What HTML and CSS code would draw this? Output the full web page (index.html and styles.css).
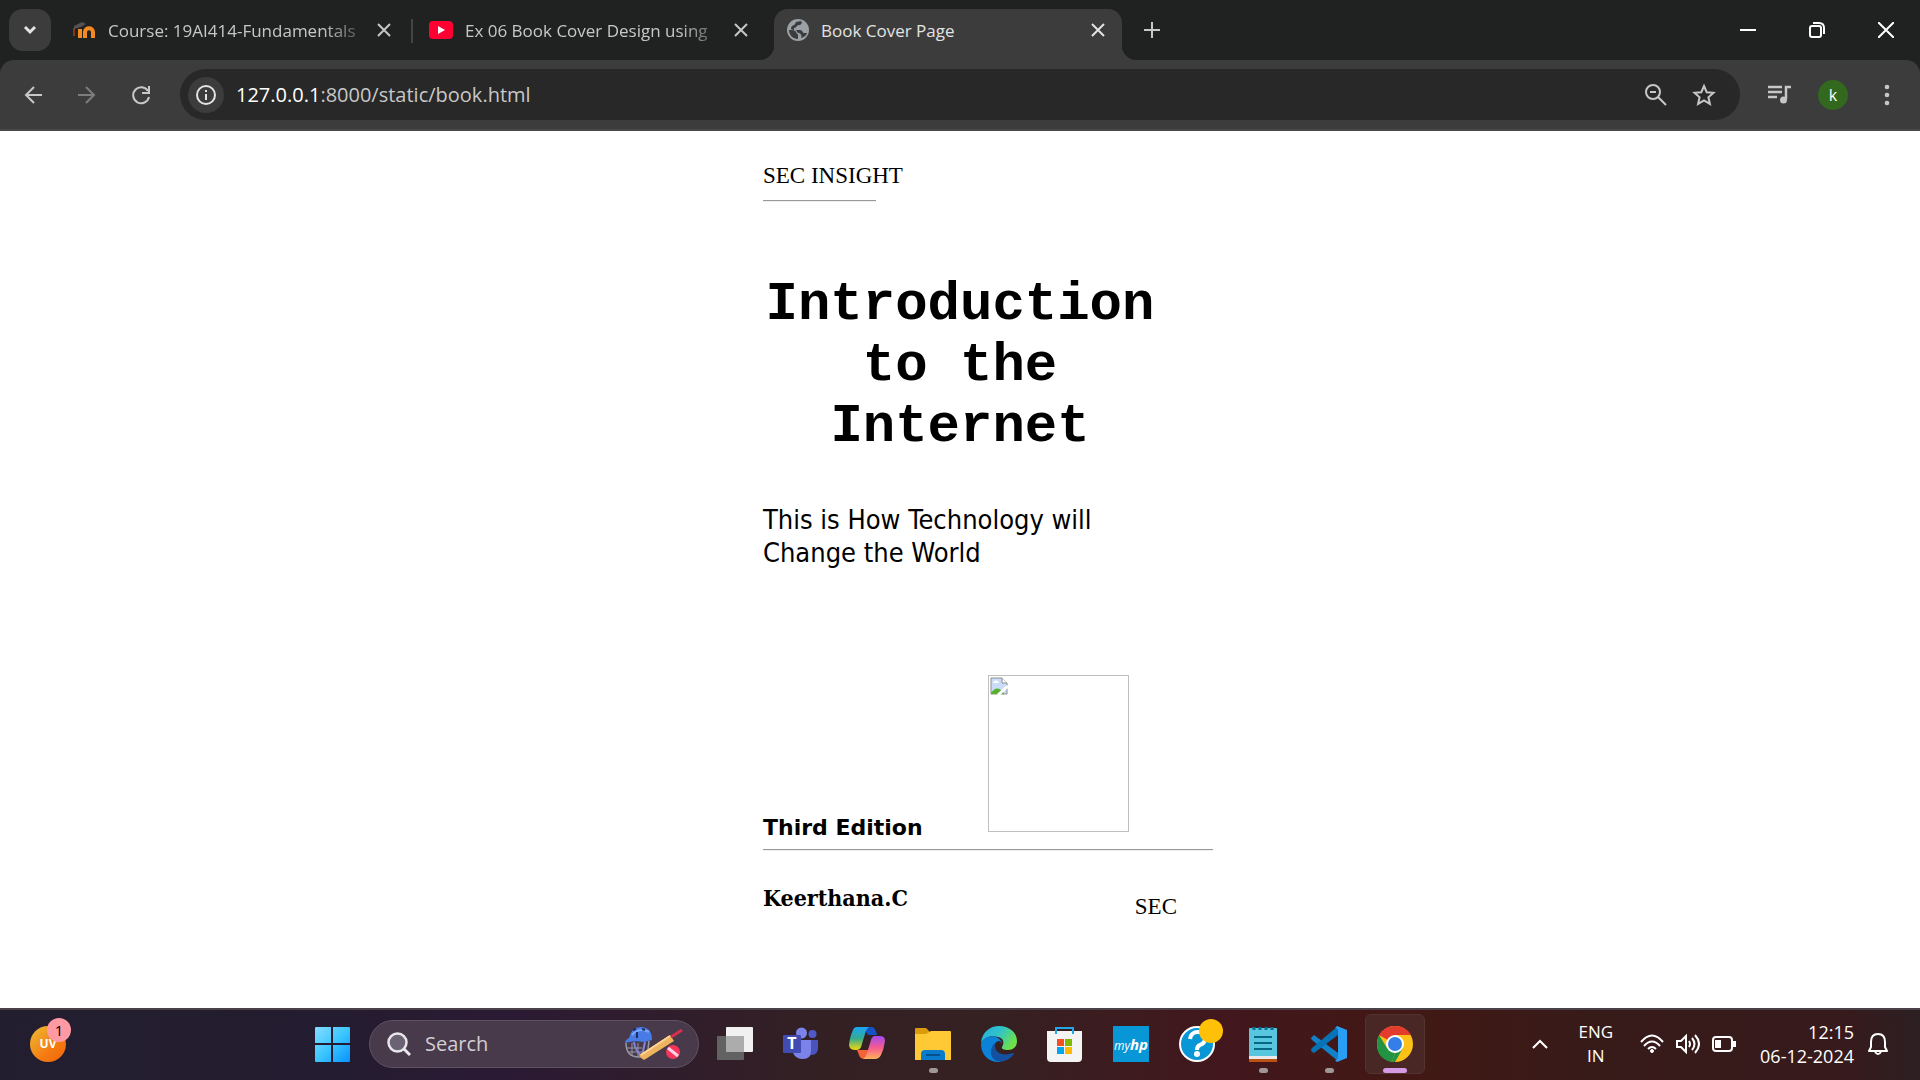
FILE: index.html
```html
<!DOCTYPE html>
<html lang="en">
<head>
<meta charset="utf-8">
<meta name="viewport" content="width=device-width, initial-scale=1">
<title>Book Cover Page</title>
<link rel="stylesheet" href="styles.css">
</head>
<body>
<header class="browser">
  <div class="tabstrip">
    <button class="tab-search" aria-label="Search tabs"><svg width="14" height="10" viewBox="0 0 14 10"><path d="M2 2l5 5 5-5" fill="none" stroke="currentColor" stroke-width="3"/></svg></button>
    <div class="tab tab-first">
      <svg class="favicon" width="24" height="24" viewBox="0 0 24 24"><path d="M8 20v-9M13 20v-6c0-5 8-5 8 0v6" fill="none" stroke="#f58a20" stroke-width="4"/><path d="M2 10v8" fill="none" stroke="#7a3c1a" stroke-width="2"/><path d="M2 8l8-4 4 2-5 3-7 2z" fill="#565052"/></svg>
      <button class="tab-title fade">Course: 19AI414-Fundamentals</button>
      <button class="tab-close" aria-label="Close tab"><svg width="14" height="14" viewBox="0 0 14 14"><path d="M1 1l12 12M13 1L1 13"/></svg></button>
    </div>
    <span class="tab-divider"></span>
    <div class="tab tab-second">
      <svg class="favicon" width="24" height="24" viewBox="0 0 24 24"><rect y="3" width="24" height="18" rx="4" fill="#ff0033"/><path d="M9 8l7 4-7 4z" fill="#fff"/></svg>
      <button class="tab-title fade">Ex 06 Book Cover Design using</button>
      <button class="tab-close" aria-label="Close tab"><svg width="14" height="14" viewBox="0 0 14 14"><path d="M1 1l12 12M13 1L1 13"/></svg></button>
    </div>
    <div class="tab tab-active">
      <svg class="favicon" width="22" height="22" viewBox="0 0 22 22"><circle cx="11" cy="11" r="11" fill="#9aa0a6"/><path d="M2 11c3 0 6 0 7 2s2 2 2 3v4c-5 0-9-4-9-9zM9 3l5-1c2 2 0 4-2 4-3 0-2 3-5 3v2h6c3 0 2 3 4 3h3c-1 3-3 4-6 5 1-3 0-4-2-5-3 0-1-3-4-3-4 0-5-1-3-4 3-1 3-2 4-4z" fill="#3c3c3c"/></svg>
      <button class="tab-title">Book Cover Page</button>
      <button class="tab-close" aria-label="Close tab"><svg width="14" height="14" viewBox="0 0 14 14"><path d="M1 1l12 12M13 1L1 13"/></svg></button>
    </div>
    <button class="new-tab" aria-label="New tab"><svg width="16" height="16" viewBox="0 0 16 16"><path d="M8 0v16M0 8h16" stroke="currentColor" stroke-width="2"/></svg></button>
    <div class="window-controls">
      <button aria-label="Minimize"><svg width="16" height="16" viewBox="0 0 16 16"><path d="M0 8h16" stroke="#fff" stroke-width="2"/></svg></button>
      <button aria-label="Restore"><svg width="16" height="16" viewBox="0 0 16 16" fill="none" stroke="#fff" stroke-width="2"><rect x="1" y="4" width="11" height="11" rx="2"/><path d="M4 1h6q5 0 5 5v6"/></svg></button>
      <button aria-label="Close"><svg width="16" height="16" viewBox="0 0 16 16"><path d="M0 0l16 16M16 0L0 16" stroke="#fff" stroke-width="2"/></svg></button>
    </div>
  </div>
  <div class="toolbar">
    <button class="nav" aria-label="Back"><svg width="18" height="18" viewBox="0 0 18 18"><path d="M18 9H2M10 1L2 9l8 8"/></svg></button>
    <button class="nav nav-off" aria-label="Forward"><svg width="18" height="18" viewBox="0 0 18 18"><path d="M0 9h16M8 1l8 8-8 8"/></svg></button>
    <button class="nav" aria-label="Reload"><svg width="20" height="20" viewBox="0 0 20 20"><path d="M17 6a8 8 0 1 0 1 6M18 1v7h-7"/></svg></button>
    <div class="omnibox">
      <button class="site-info" aria-label="Site information"><svg width="20" height="20" viewBox="0 0 20 20"><circle cx="10" cy="10" r="9" fill="none" stroke="currentColor" stroke-width="2"/><path d="M10 9v6M10 5v2" stroke="currentColor" stroke-width="2"/></svg></button>
      <a class="url" href="#cover"><span class="host">127.0.0.1</span>:8000/static/book.html</a>
      <button class="box-icon" aria-label="Zoom"><svg width="22" height="22" viewBox="0 0 22 22" fill="none" stroke="currentColor" stroke-width="2"><circle cx="8" cy="8" r="7"/><path d="M13 13l8 8M5 8h6"/></svg></button>
      <button class="box-icon" aria-label="Bookmark"><svg width="24" height="24" viewBox="0 0 24 24"><path d="M12 3l2.700 6.200 6.800.6-5.100 4.500 1.500 6.600-5.900-3.500-5.900 3.500 1.500-6.600-5.100-4.500 6.800-.6z" fill="none" stroke="currentColor" stroke-width="2"/></svg></button>
    </div>
    <button class="nav media" aria-label="Media"><svg width="24" height="24" viewBox="0 0 24 24"><path d="M1 4h14M1 9h14M1 14h9M24 4h-5v12" stroke-width="2.500"/><circle cx="16.500" cy="17" r="3.500" fill="currentColor" stroke="none"/></svg></button>
    <button class="profile" aria-label="Profile k">k</button>
    <button class="nav" aria-label="Menu"><svg width="6" height="26" viewBox="0 0 6 26"><g fill="currentColor" stroke="none"><circle cx="3" cy="5" r="2.300"/><circle cx="3" cy="13" r="2.300"/><circle cx="3" cy="21" r="2.300"/></g></svg></button>
  </div>
</header>

<main class="page" id="cover">
  <article class="cover">
    <p class="brand">SEC INSIGHT</p>
    <hr class="rule rule-short">
    <h1 class="title">Introduction to the Internet</h1>
    <p class="subtitle">This is How Technology will Change the World</p>
    <div class="edition-row">
      <strong class="edition">Third Edition</strong>
      <div class="picture" role="img" aria-label="Cover picture"><svg width="18" height="18" viewBox="0 0 18 18"><path d="M1 1h11l5 5v11H1z" fill="#c9dcf8" stroke="#8e8e8e"/><path d="M3 6q0-2 2-2 2-2 4 2z" fill="#fff"/><path d="M1 16q6-9 13 0v1H1z" fill="#58b02e"/><path d="M12 1v5h5" fill="#fff" stroke="#8e8e8e"/><path d="M8 18L18 9" stroke="#fff" stroke-width="3"/></svg></div>
    </div>
    <hr class="rule rule-long">
    <div class="author-row">
      <strong class="author">Keerthana.C</strong>
      <p class="publisher">SEC</p>
    </div>
  </article>
</main>

<footer class="taskbar">
  <button class="widget" aria-label="Widgets"><span class="uv">UV</span><span class="count">1</span></button>
  <div class="apps">
    <button class="app" aria-label="Start"><svg width="36" height="36" viewBox="0 0 36 36"><defs><linearGradient id="win" x1="0" y1="0" x2="1" y2="1"><stop offset="0" stop-color="#86dcff"/><stop offset=".5" stop-color="#3cc6ff"/><stop offset="1" stop-color="#0793ff"/></linearGradient></defs><path d="M0 2q0-1 1-1h15v16H0zM18 1h16q1 0 1 1v15H18zM0 19h16v17H1q-1 0-1-1zM18 19h17v16q0 1-1 1H18z" fill="url(#win)"/></svg></button>
    <label class="search">
      <svg width="24" height="24" viewBox="0 0 24 24" fill="none" stroke="#e8e6ea" stroke-width="2.500"><circle cx="10.500" cy="10.500" r="9" fill="#6b6273"/><path d="M17 17l6 6" stroke-width="3"/></svg>
      <input class="search-input" type="text" placeholder="Search" aria-label="Search">
      <svg width="60" height="36" viewBox="0 0 60 36"><path d="M2 17q0 14 13 14h8l2-16" fill="none" stroke="#9a98a5" stroke-width="1.500"/><path d="M3 22h15M5 26h14M8 17v12M14 17v14" stroke="#9a98a5"/><path d="M10 16q1 9 8 14l3-14" fill="none" stroke="#8584dc" stroke-width="2"/><path d="M5 12Q8 0 18 1q10 1 10 13l-8 2Q10 14 1 17q0-3 4-5z" fill="#487be5"/><path d="M8 9q7-8 17-3" fill="none" stroke="#78a8ff" stroke-width="2"/><path d="M13 6v6M18 3l3 1M9 4l3-1" stroke="#1d2d62" stroke-width="2"/><path d="M15 29L46 9l4 6-30 19q-3-1-5-5z" fill="#edb35f"/><path d="M17 29L46 10" stroke="#ffd695" stroke-width="2"/><path d="M47 11L58 4" stroke="#d92f4b" stroke-width="3"/><circle cx="49" cy="26" r="7" fill="#f6345c"/><path d="M44 22l10 8" stroke="#ffd3e5" stroke-width="3"/></svg>
    </label>
    <button class="app" aria-label="Task view"><svg width="36" height="36" viewBox="0 0 36 36"><rect x="9" y="1" width="27" height="25" rx="1" fill="#f1f1f1"/><rect y="10" width="27" height="24" rx="1" fill="#626262"/><path d="M9 10h18v16H9z" fill="#acacac"/></svg></button>
    <button class="app" aria-label="Teams"><svg width="36" height="36" viewBox="0 0 36 36"><circle cx="29.500" cy="8" r="4" fill="#5059c9"/><path d="M25 14h10v8q0 8-9 7z" fill="#4b53bc"/><circle cx="18.500" cy="7" r="5.500" fill="#7b83eb"/><path d="M12 14h16v11q0 8-8 8-7 0-10-6z" fill="#7b83eb"/><rect y="9" width="18" height="18" rx="1" fill="#424bb2"/><text x="9" y="23" fill="#fff" text-anchor="middle" class="teams-letter">T</text></svg></button>
    <button class="app" aria-label="Copilot"><svg width="36" height="36" viewBox="0 0 36 36"><defs><linearGradient id="cp1" x1="0" y1="0" x2="0" y2="1"><stop offset="0" stop-color="#1aa6f4"/><stop offset=".5" stop-color="#35ac8f"/><stop offset="1" stop-color="#f3da09"/></linearGradient><linearGradient id="cp2" x1="0" y1="0" x2="0" y2="1"><stop offset="0" stop-color="#a34af1"/><stop offset=".5" stop-color="#f55a90"/><stop offset="1" stop-color="#ffb15a"/></linearGradient></defs><path d="M14 1h9q3 0 5 8h-9z" fill="#1552c5"/><path d="M8 24h12l-4 9q-5 0-6-4z" fill="#f66238"/><path d="M8 1h12q-3 2-4 7l-4 13q-1 3-5 3-7 0-7-5 1-9 4-15 1-3 4-3z" fill="url(#cp1)"/><path d="M26 10h5q5 0 5 5-1 8-4 14-2 4-6 4H14q3-2 4-6l4-13q1-4 4-4z" fill="url(#cp2)"/></svg></button>
    <button class="app open" aria-label="File Explorer"><svg width="36" height="36" viewBox="0 0 36 36"><path d="M0 3q0-1 1-1h10l4 4-3 5H0z" fill="#dc9b0a"/><path d="M0 8h11l5-3h19q1 0 1 1v28H0z" fill="#fec934"/><path d="M6 34V28q0-4 4-4h16q4 0 4 4v6z" fill="#087bcd"/><path d="M11 29h14" stroke="#07508c" stroke-width="2"/></svg></button>
    <button class="app" aria-label="Edge"><svg width="36" height="36" viewBox="0 0 36 36"><defs><linearGradient id="edge" x1="0" y1="0" x2="1" y2=".5"><stop offset="0" stop-color="#27abdc"/><stop offset=".5" stop-color="#2fc3cb"/><stop offset="1" stop-color="#6de04b"/></linearGradient></defs><path d="M0 17C1 6 9 0 18 0c11 0 18 7 18 15 0 6-4 9-9 9-4 0-7-1-6-3 3-5 1-9-4-10C9 9 3 12 0 17z" fill="url(#edge)"/><path d="M0 18c2-7 11-10 17-6 3 2 4 4 4 6-1-5-7-4-8 3-1 6 2 12 7 15C9 37 0 30 0 18z" fill="#0b82d8"/><path d="M14 17c-1 9 6 14 18 10l1 1c-6 8-14 9-19 6-6-4-5-13 0-17z" fill="#1451a0"/></svg></button>
    <button class="app" aria-label="Microsoft Store"><svg width="36" height="36" viewBox="0 0 36 36"><path d="M9 8V2h17v6" fill="none" stroke="#20a8e8" stroke-width="2"/><path d="M0 5h35v27q0 4-4 4H4q-4 0-4-4z" fill="#f4f4f4"/><path d="M9 8V5M26 8V5" stroke="#20a8e8" stroke-width="2"/><path d="M10 13h7v7h-7z" fill="#f25022"/><path d="M18 13h7v7h-7z" fill="#7fba00"/><path d="M10 21h7v7h-7z" fill="#00a4ef"/><path d="M18 21h7v7h-7z" fill="#ffb900"/></svg></button>
    <button class="app" aria-label="myHP"><span class="myhp">my<b>hp</b></span></button>
    <button class="app" aria-label="HP Support"><svg width="52" height="52" viewBox="0 0 52 52"><circle cx="26" cy="26" r="17" fill="#0796d6" stroke="#fff" stroke-width="2"/><path d="M19 21q1-7 8-7t7 7q0 4-5 6-3 1-3 5" fill="none" stroke="#fff" stroke-width="4"/><circle cx="26" cy="36" r="3" fill="#fff"/><circle cx="40" cy="13" r="12" fill="#ffc107"/></svg></button>
    <button class="app open" aria-label="Notepad"><svg width="36" height="36" viewBox="0 0 36 36"><path d="M4 33h28v3H4z" fill="#b95212"/><path d="M4 29h28v4H4z" fill="#e9e9ed"/><path d="M4 3q0-1 1-1h26q1 0 1 1v27H4z" fill="#58c6de"/><path d="M9 11h18M9 17h18M9 23h18" stroke="#076785" stroke-width="2"/><path d="M9 1v3M15 1v3M21 1v3M27 1v3" stroke="#067090" stroke-width="3"/></svg></button>
    <button class="app open" aria-label="Visual Studio Code"><svg width="36" height="36" viewBox="0 0 36 36"><path d="M0 12l3-3 24 18v8L1 14q-1-1-1-2z" fill="#1182c9"/><path d="M0 24q0 2 3 3L27 9V0L1 22q-1 1-1 2z" fill="#0872b6"/><path d="M26 0l10 4v28l-10 4-2-2q3 0 3-3V5q0-3-3-3z" fill="#2a9df4"/></svg></button>
    <button class="app open current" aria-label="Chrome"><svg width="36" height="36" viewBox="0 0 36 36"><circle cx="18" cy="18" r="18" fill="#fbc116"/><path d="M18 18L2 9Q7 0 18 0t16 9H18z" fill="#e33b2e"/><path d="M2 9l8 13 8 5-3 9Q0 33 0 18q0-5 2-9z" fill="#229342"/><path d="M15 36h3l8-14-8 5z" fill="#229342"/><circle cx="18" cy="18" r="9" fill="#fff"/><circle cx="18" cy="18" r="7" fill="#347ee8"/></svg></button>
  </div>
  <div class="tray">
    <button class="chevron" aria-label="Hidden icons"><svg width="16" height="10" viewBox="0 0 16 10"><path d="M1 9l7-7 7 7" fill="none" stroke="#fff" stroke-width="2"/></svg></button>
    <button class="lang">ENG<br>IN</button>
    <button class="status" aria-label="Network, volume and battery">
      <svg width="24" height="20" viewBox="0 0 24 20" fill="none" stroke="#fff" stroke-width="2"><path d="M1 8q11-13 22 0M4 12q8-9 16 0M8 15q4-4 8 0"/><circle cx="12" cy="17" r="1.500" fill="#fff" stroke-width="1"/></svg>
      <svg width="24" height="20" viewBox="0 0 24 20" fill="none" stroke="#fff" stroke-width="2"><path d="M1 7h4l5-5v16l-5-5H1zM13 7q2 3 0 6M16 4q5 6 0 12M19 1q8 9 0 18"/></svg>
      <svg width="24" height="16" viewBox="0 0 24 16"><rect x="1" y="1" width="19" height="14" rx="3" fill="none" stroke="#fff" stroke-width="2"/><path d="M3 4h6v8H3zM21 5h3v6h-3z" fill="#fff"/></svg>
    </button>
    <button class="clock">12:15<br>06-12-2024</button>
    <button class="bell" aria-label="Notifications"><svg width="20" height="22" viewBox="0 0 20 22"><path d="M1 18l2-4V9q0-8 7-8t7 8v5l2 4zM7 19q3 4 6 0" fill="none" stroke="#fff" stroke-width="2" stroke-linejoin="round"/></svg></button>
  </div>
</footer>
</body>
</html>
```
FILE: styles.css
```css
* { box-sizing: border-box; }

body {
  margin: 0;
  min-height: 100vh;
  display: flex;
  flex-direction: column;
  background: #fff;
  color: #000;
  font-family: "Liberation Serif", "Times New Roman", serif;
}

p, h1, hr { margin: 0; }

button {
  display: flex;
  align-items: center;
  justify-content: center;
  padding: 0;
  border: 0;
  background: none;
  color: inherit;
  font: inherit;
}

svg { flex: none; display: block; }

/* Browser window */
.browser {
  background: #202221;
  color: #c7c7c7;
  font: 17px/24px "Open Sans", "Noto Sans", sans-serif;
}

.tabstrip { display: flex; height: 60px; padding: 9px 0 0 9px; }

.tab-search {
  width: 42px;
  height: 42px;
  border-radius: 14px;
  background: #3c3c3c;
  color: #e3e3e3;
}

.tab { display: flex; align-items: center; height: 42px; }
.tab-first { width: 360px; padding: 0 20px 0 21px; }
.tab-second { width: 361px; padding: 0 26px 0 16px; }
.tab-active {
  position: relative;
  width: 348px;
  height: 51px;
  padding: 0 17px 9px 13px;
  border-radius: 14px 14px 0 0;
  background: #3c3c3c;
  color: #e3e3e3;
}
.tab-active::before,
.tab-active::after {
  content: "";
  position: absolute;
  bottom: 0;
  width: 14px;
  height: 14px;
}
.tab-active::before { right: 100%; background: radial-gradient(circle at 0 0, transparent 14px, #3c3c3c 14px); }
.tab-active::after { left: 100%; background: radial-gradient(circle at 100% 0, transparent 14px, #3c3c3c 14px); }

.tab-title {
  flex: 1;
  display: block;
  margin: 2px 16px 0 12px;
  white-space: nowrap;
  text-align: left;
}
.fade { -webkit-mask-image: linear-gradient(90deg, #000 85%, transparent 105%); mask-image: linear-gradient(90deg, #000 85%, transparent 105%); }

.tab-close { width: 14px; height: 24px; }
.tab-close path { stroke: currentColor; stroke-width: 2; }
.tab-divider { width: 2px; height: 24px; margin-top: 10px; background: #444; }
.new-tab { width: 42px; height: 42px; margin-left: 9px; }

.window-controls { display: flex; margin-left: auto; height: 42px; }
.window-controls button { width: 69px; }

.toolbar {
  display: flex;
  align-items: center;
  height: 71px;
  padding: 0 6px;
  border-bottom: 2px solid #484848;
  border-radius: 14px 14px 0 0;
  background: #3c3c3c;
}
.nav { width: 54px; height: 42px; }
.nav svg { fill: none; stroke: currentColor; stroke-width: 2; }
.nav-off { color: #7d7d7d; }
.media { margin-left: 12px; }

.omnibox {
  flex: 1;
  display: flex;
  align-items: center;
  height: 51px;
  margin-left: 12px;
  padding: 0 12px 0 8px;
  border-radius: 26px;
  background: #282828;
}
.site-info { width: 36px; height: 36px; border-radius: 50%; background: #3c3c3c; color: #e3e3e3; }
.url { flex: 1; margin-left: 12px; color: #c7c7c7; font-size: 20px; text-decoration: none; }
.host { color: #fff; }
.box-icon { width: 48px; height: 42px; }
.profile { width: 30px; height: 30px; margin: 0 12px; border-radius: 50%; background: #33691e; color: #fff; font-size: 16px; }

/* Book cover */
.page { flex: 1; padding-top: 32px; }
.cover { width: 394px; margin: 0 auto; }
.brand, .publisher { font-size: 23px; line-height: 26px; }
.rule { height: 2px; border: 0; border-top: 1px solid #999; background: #eee; }
.rule-short { width: 113px; margin-top: 11px; }
.rule-long { width: 450px; margin-top: 7px; }

.title {
  margin-top: 72px;
  font: bold 54px/61px "Courier New", "Liberation Mono", monospace;
  text-align: center;
}
.subtitle { margin-top: 46px; font: 27px/33px Tahoma, "DejaVu Sans Condensed", sans-serif; }

.edition-row { display: flex; align-items: flex-end; justify-content: space-between; height: 167px; width: 366px; margin-top: 106px; }
.edition { font: bold 22px/28px "DejaVu Sans", sans-serif; }
.picture { align-self: flex-start; width: 141px; height: 157px; padding: 1px; border: 1px solid #c0c0c0; }

.author-row { display: flex; align-items: flex-start; justify-content: space-between; width: 414px; margin-top: 33px; }
.author { font: bold 23px/28px Georgia, "DejaVu Serif Condensed", serif; }
.publisher { padding-top: 10px; }

/* Taskbar */
.taskbar {
  display: flex;
  align-items: center;
  height: 72px;
  padding: 0 32px 2px 30px;
  border-top: 2px solid #4b4148;
  background: linear-gradient(90deg, #221e2f 0%, #241c30 18%, #2c1a34 27%, #332024 42%, #352122 51%, #42171d 64%, #421814 73%, #371b19 83%, #371a1c 96%, #2c2023 100%);
  color: #fff;
  font: 17px/24px "Open Sans", "Noto Sans", sans-serif;
}

.widget { position: relative; width: 36px; height: 36px; border-radius: 50%; background: linear-gradient(135deg, #edbe36, #f57b12 60%, #ef650b); }
.uv { font-size: 12px; font-weight: bold; }
.count {
  position: absolute;
  left: 17px;
  top: -8px;
  width: 24px;
  height: 24px;
  border-radius: 50%;
  background: #ff99a4;
  color: #000;
  font-size: 15px;
}

.apps { display: flex; align-items: center; gap: 6px; margin-left: 237px; }
.app { position: relative; width: 60px; height: 60px; border-radius: 6px; }
.open::after {
  content: "";
  position: absolute;
  bottom: 1px;
  left: 50%;
  width: 9px;
  height: 5px;
  margin-left: -4px;
  border-radius: 3px;
  background: #a09799;
}
.current { border: 1px solid #523331; background: #492725; }
.current::after { bottom: 0; width: 24px; margin-left: -12px; background: #d69ae5; }
.teams-letter { font: bold 16px "Open Sans", sans-serif; }
.myhp { width: 36px; height: 36px; background: #0796d6; font: italic 12px/36px "Open Sans", sans-serif; }
.myhp b { font-size: 15px; }

.search {
  display: flex;
  align-items: center;
  width: 330px;
  height: 48px;
  padding: 0 14px 0 17px;
  border: 1px solid #5f5260;
  border-radius: 24px;
  background: #483a4b;
}
.search-input { flex: 1; min-width: 0; padding: 0 0 0 14px; border: 0; outline: 0; background: none; color: #fff; font: 20px/24px "Open Sans", sans-serif; }
.search-input::placeholder { color: #d3cdd4; opacity: 1; }

.tray { display: flex; align-items: center; margin-left: auto; font-size: 18px; }
.chevron { width: 36px; height: 48px; }
.lang { display: block; margin-left: 20px; font-size: 17px; text-align: center; }
.status { gap: 12px; margin-left: 27px; }
.clock { display: block; margin-left: 24px; text-align: right; }
.bell { margin-left: 14px; }
```
